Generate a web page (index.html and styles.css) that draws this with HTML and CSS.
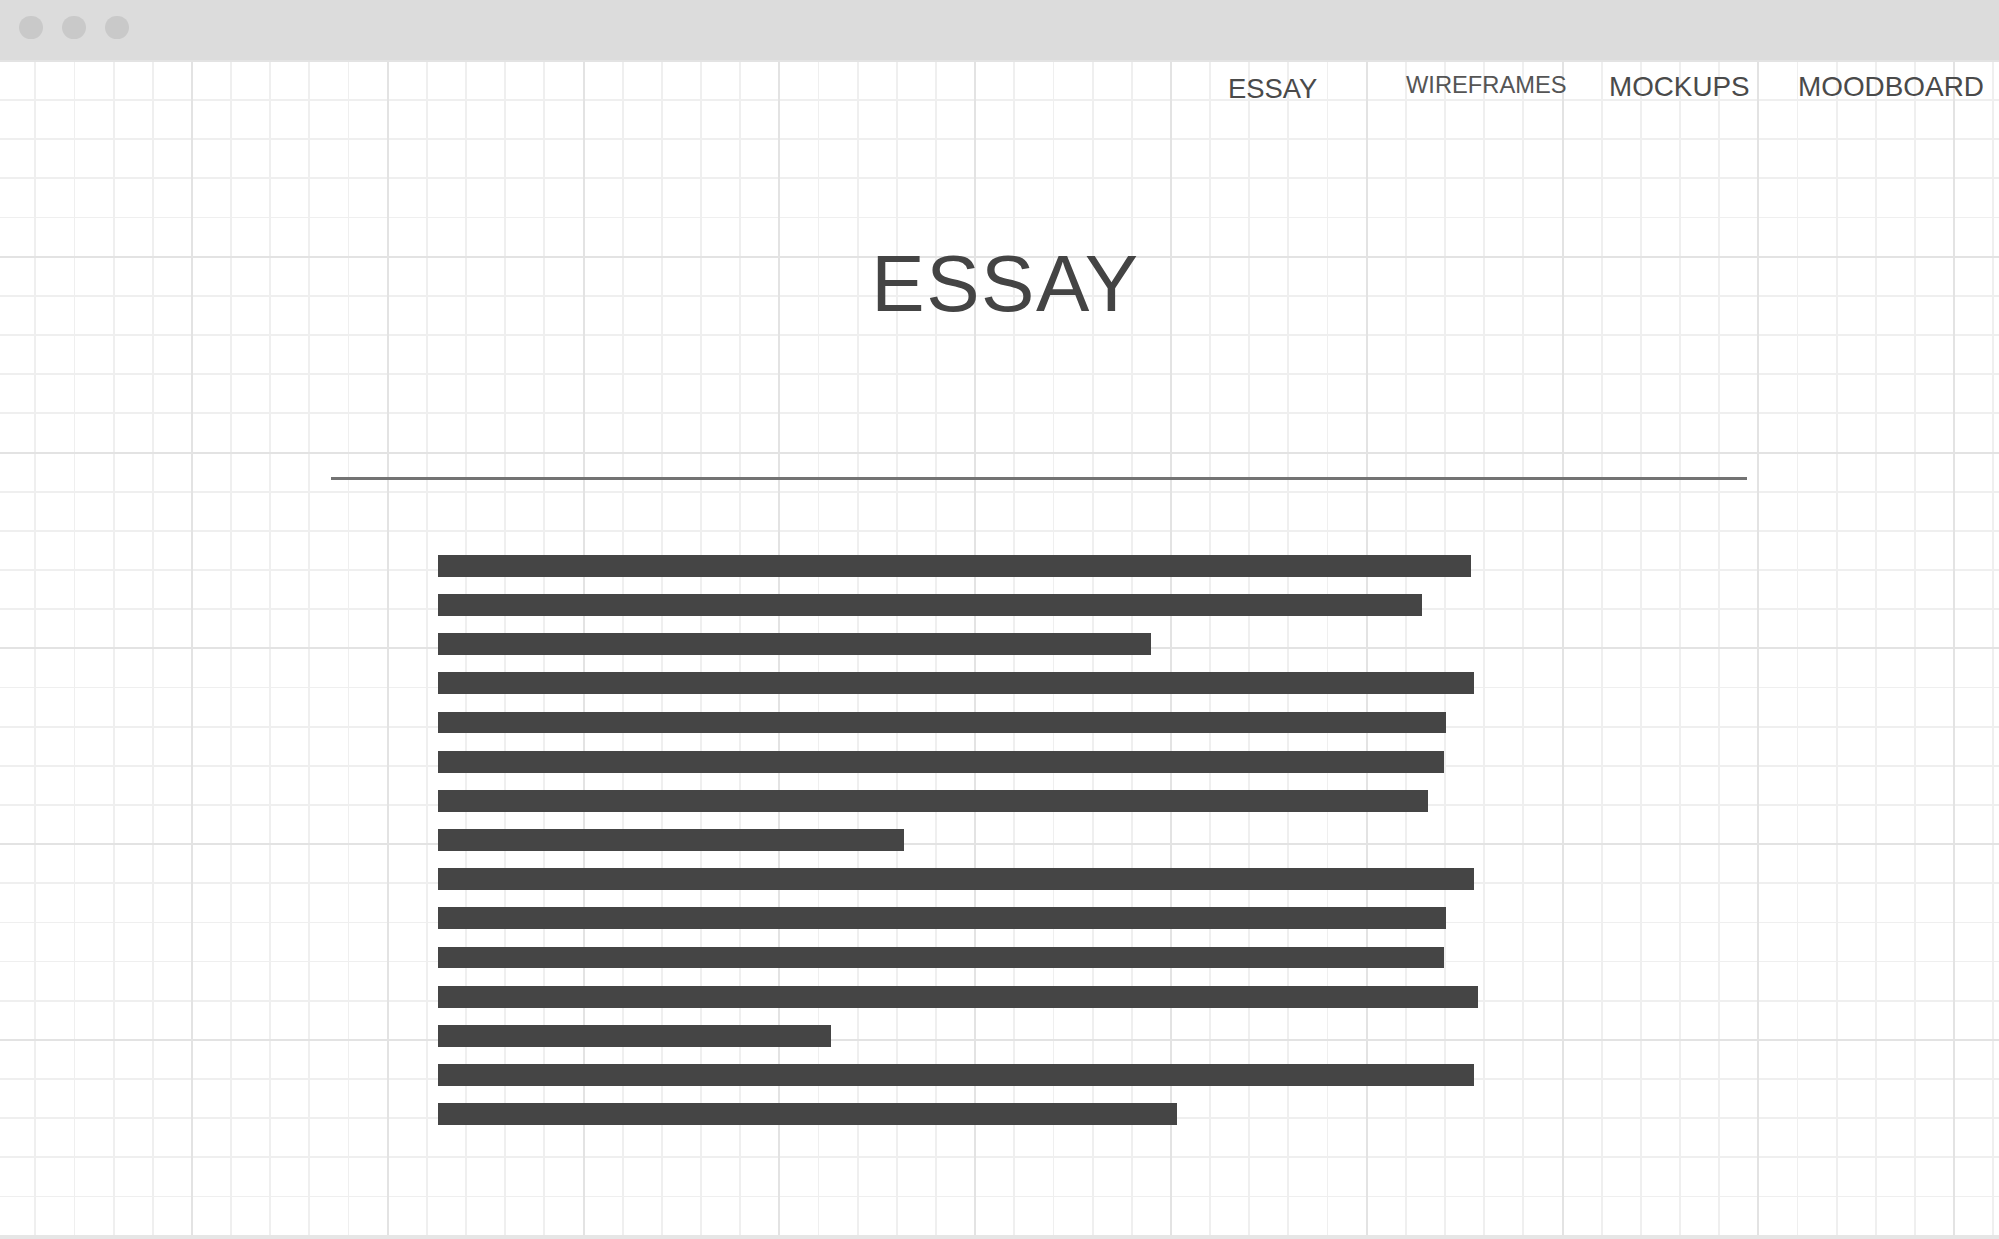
FILE: index.html
```html
<!DOCTYPE html>
<html lang="en">
<head>
<meta charset="utf-8">
<title>Essay</title>
<link rel="stylesheet" href="styles.css">
</head>
<body>
<div class="window">
  <div class="titlebar">
    <span class="dot"></span>
    <span class="dot"></span>
    <span class="dot"></span>
  </div>
  <main class="canvas">
    <nav class="nav">
      <a class="nav-item nav-essay">ESSAY</a>
      <a class="nav-item nav-wireframes">WIREFRAMES</a>
      <a class="nav-item nav-mockups">MOCKUPS</a>
      <a class="nav-item nav-moodboard">MOODBOARD</a>
    </nav>
    <h1 class="title">ESSAY</h1>
    <div class="rule"></div>
    <div class="lines">
      <div class="line" style="width:1033px"></div>
      <div class="line" style="width:984px"></div>
      <div class="line" style="width:713px"></div>
      <div class="line" style="width:1036px"></div>
      <div class="line" style="width:1008px"></div>
      <div class="line" style="width:1006px"></div>
      <div class="line" style="width:990px"></div>
      <div class="line" style="width:466px"></div>
      <div class="line" style="width:1036px"></div>
      <div class="line" style="width:1008px"></div>
      <div class="line" style="width:1006px"></div>
      <div class="line" style="width:1040px"></div>
      <div class="line" style="width:393px"></div>
      <div class="line" style="width:1036px"></div>
      <div class="line" style="width:739px"></div>
    </div>
  </main>
</div>
</body>
</html>
```

FILE: styles.css
```css
html, body {
  margin: 0;
  padding: 0;
  background: #ffffff;
}

body {
  font-family: "Liberation Sans", Arial, sans-serif;
  color: #444444;
}

.window {
  width: 1999px;
  height: 1239px;
  display: flex;
  flex-direction: column;
  overflow: hidden;
}

.titlebar {
  height: 60px;
  flex: 0 0 60px;
  background: #dcdcdc;
  display: flex;
  align-items: flex-start;
  gap: 19.3px;
  padding: 15.5px 0 0 19.3px;
  box-sizing: border-box;
}

.dot {
  width: 23.6px;
  height: 23.6px;
  border-radius: 50%;
  background: #c9c9c9;
}

.canvas {
  flex: 1 1 auto;
  border-bottom: 4px solid #e6e6e6;
  background-color: #ffffff;
  background-image:
    repeating-linear-gradient(to right, transparent 0 191px, #e3e3e3 191px 193px, transparent 193px 195.8px),
    repeating-linear-gradient(to bottom, #e3e3e3 0 2px, transparent 2px 195.8px),
    repeating-linear-gradient(to right, transparent 0 34.36px, #efefef 34.36px 36.2px, transparent 36.2px 39.16px),
    repeating-linear-gradient(to bottom, #efefef 0 1.8px, transparent 1.8px 39.16px);
  display: flex;
  flex-direction: column;
}

.nav {
  display: flex;
  align-items: flex-start;
  padding: 13px 0 0 1228px;
  height: 42px;
  box-sizing: border-box;
}

.nav-item {
  display: block;
  color: #4a4a4a;
  line-height: 1;
  text-decoration: none;
  white-space: nowrap;
}

.nav-essay {
  width: 178px;
  font-size: 27.4px;
  margin-top: 1.8px;
}

.nav-wireframes {
  width: 203px;
  font-size: 23.7px;
  margin-top: 0.8px;
  color: #555555;
}

.nav-mockups {
  width: 189px;
  font-size: 27.8px;
  margin-top: 0.2px;
}

.nav-moodboard {
  font-size: 27.9px;
  margin-top: 0;
}

.title {
  margin: 142px 0 0 0;
  padding-left: 12px;
  font-size: 80px;
  line-height: 80px;
  font-weight: normal;
  letter-spacing: 1.5px;
  text-align: center;
  color: #444444;
}

.rule {
  margin: 152.5px 0 0 331px;
  width: 1416px;
  height: 3.5px;
  background: #737373;
}

.lines {
  margin: 75px 0 0 438px;
  display: flex;
  flex-direction: column;
  align-items: flex-start;
  gap: 17.36px;
}

.line {
  height: 21.8px;
  background: #454545;
}
```
